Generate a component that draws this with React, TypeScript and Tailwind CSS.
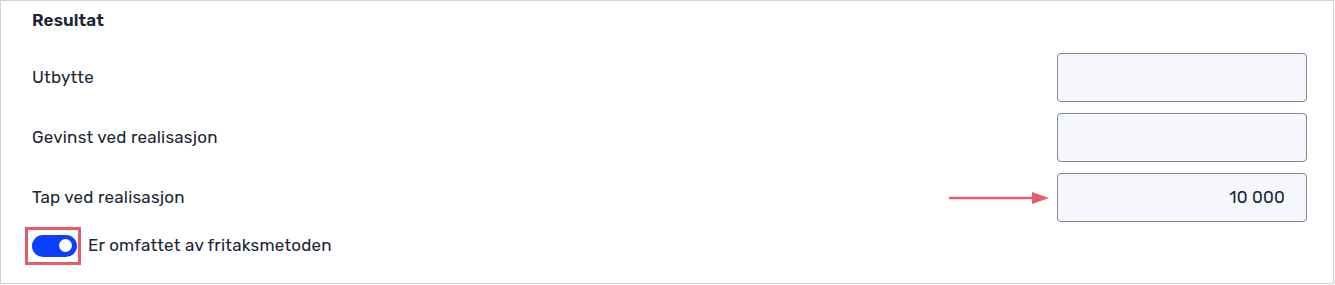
import React from "react";

function Field({ value }: { value?: string }) {
  return (
    <div className="w-[250px] h-[49px] rounded-[4px] border border-[#80869a] bg-[#f5f7fb] flex items-center justify-end pr-[21px] text-[17px] tracking-[0.2px] text-[#1e2738]">
      {value}
    </div>
  );
}

export default function App() {
  return (
    <div className="w-[1334px] h-[284px] border border-[#d2d2d2] bg-white pl-[31px] pr-[26px] pt-[9px] text-[#1c2536]" style={{ fontFamily: "Rubik, Inter, 'Noto Sans', sans-serif" }}>
      <div className="text-[17px] font-semibold leading-[20px] tracking-[0.1px]">Resultat</div>
      <div className="mt-[23px] flex flex-col gap-[11px]">
        <div className="flex items-center justify-between">
          <span className="text-[17px] tracking-[0.2px]">Utbytte</span>
          <Field />
        </div>
        <div className="flex items-center justify-between">
          <span className="text-[17px] tracking-[0.2px]">Gevinst ved realisasjon</span>
          <Field />
        </div>
        <div className="flex items-center justify-between">
          <span className="text-[17px] tracking-[0.2px]">Tap ved realisasjon</span>
          <div className="flex items-center gap-[8px]">
            <svg width="100" height="14" viewBox="0 0 100 14">
              <line x1="0" y1="7" x2="84" y2="7" stroke="#e65b69" strokeWidth="2.6" />
              <polygon points="83,1 100,7 83,13" fill="#e65b69" />
            </svg>
            <Field value="10 000" />
          </div>
        </div>
      </div>
      <div className="mt-[11px] flex items-center gap-[11px]">
        <div className="relative">
          <div className="w-[45px] h-[22px] rounded-full bg-[#0b3ffe] flex items-center justify-end pr-[5px]">
            <div className="w-[13px] h-[13px] rounded-full bg-white" />
          </div>
          <div className="absolute left-[-7px] top-[-8px] w-[56px] h-[38px] border-[3px] border-[#e65b69]" />
        </div>
        <span className="text-[17px] tracking-[0.2px]">Er omfattet av fritaksmetoden</span>
      </div>
    </div>
  );
}
